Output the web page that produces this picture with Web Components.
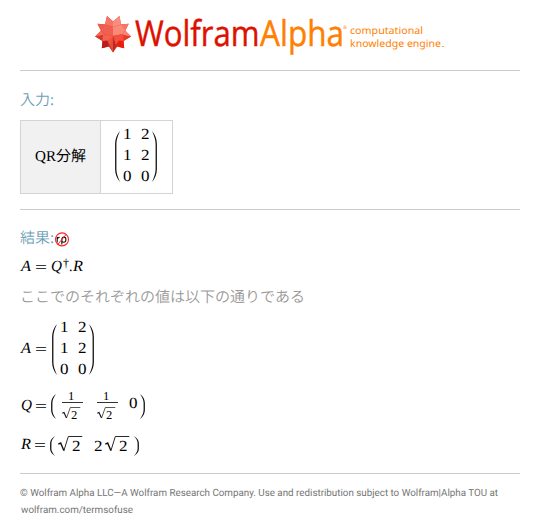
<!DOCTYPE html>
<html lang="ja"><head><meta charset="utf-8"><title>Wolfram|Alpha</title>
<style>
body{margin:0;background:#fff;font-family:"Noto Sans","Noto Sans CJK JP",sans-serif}
</style></head><body>
<wa-page></wa-page>
<script>
const define=(name,html)=>customElements.define(name,class extends HTMLElement{
  connectedCallback(){
    if(this.shadowRoot)return;
    const root=this.attachShadow({mode:'open'});
    const t=document.createElement('template');
    t.innerHTML=typeof html==='function'?html(this):html;
    root.append(t.content.cloneNode(true));
  }
});
const at=(e,n,d='')=>e.getAttribute(n)??d;

/* A run of text fitted to width w; b is its baseline, g the space before it. */
define('t-run',e=>`<style>:host{display:block;flex:none;width:${at(e,'w')}px;height:${at(e,'h','20')}px;margin-left:${at(e,'g','0')}px}
svg{display:block;overflow:visible}text{fill:currentColor;white-space:pre;text-rendering:geometricPrecision}</style>
<svg width="${at(e,'w')}" height="${at(e,'h','20')}"><text x="0" y="${at(e,'b','15')}" textLength="${at(e,'w')}" lengthAdjust="spacingAndGlyphs" font-size="${at(e,'s','15.5')}" ${e.hasAttribute('i')?'font-style="italic"':''} ${e.hasAttribute('k')?`stroke="currentColor" stroke-width="${at(e,'k')}"`:''}>${e.textContent}</text></svg>`);

define('m-paren',e=>{
  const h=+at(e,'h'),w=+at(e,'w','5'),c=Math.min(h*.36,13),r=at(e,'side')==='r';
  return `<style>:host{display:block;flex:none;margin-left:${at(e,'g','0')}px;margin-top:${at(e,'t','0')}px}svg{display:block;overflow:visible}</style>
  <svg width="${w}" height="${h}"><g ${r?`transform="translate(${w} 0) scale(-1 1)"`:''} fill="#111"><path d="M${w} 0C1.6 ${c*.3} .1 ${c*.65} .1 ${c}V${h-c}C.1 ${h-c*.65} 1.6 ${h-c*.3} ${w} ${h}C2.6 ${h-c*.4} 1.4 ${h-c*.7} 1.4 ${h-c}V${c}C1.4 ${c*.7} 2.6 ${c*.4} ${w} 0Z"/></g></svg>`});

define('m-matrix',`<style>:host{display:flex;align-items:flex-start;height:58px}
.g{display:grid;grid-template-columns:8.5px 8.5px;column-gap:9.5px;grid-auto-rows:21px;margin:0 3px}</style>
<m-paren h="51" t="4"></m-paren><div class="g">
<t-run w="8.5" h="21" b="12">1</t-run><t-run w="8.5" h="21" b="12">2</t-run>
<t-run w="8.5" h="21" b="12">1</t-run><t-run w="8.5" h="21" b="12">2</t-run>
<t-run w="8.5" h="21" b="12">0</t-run><t-run w="8.5" h="21" b="12">0</t-run></div>
<m-paren h="51" t="4" side="r" g="-.5"></m-paren>`);

define('m-root',e=>{
  const sm=e.hasAttribute('small');
  return sm?`<style>:host{display:flex;width:20px;height:14px}svg{flex:none;overflow:visible}</style>
  <svg width="9" height="14" fill="none" stroke="#111"><path d="M.3 7.3L2 6.5L4.5 12" stroke-width="1.1"/><path d="M4.5 12L8.3 1.5H18.3" stroke-width=".7"/></svg><t-run w="6.3" h="14" b="13" s="12">2</t-run>`
  :`<style>:host{display:flex;width:25px;height:20px;margin-left:${at(e,'g','0')}px}svg{flex:none;overflow:visible}</style>
  <svg width="14" height="20" fill="none" stroke="#111"><path d="M.3 9.2L2.7 8L5.8 15.6" stroke-width="1.4"/><path d="M5.8 16L10.3 1.5H24.3" stroke-width=".9"/></svg><t-run w="8.5" h="20" b="16">2</t-run>`});

define('m-frac',e=>`<style>:host{display:flex;flex-direction:column;width:21px;margin-left:${at(e,'g','0')}px}
.n{display:flex;justify-content:center;height:12px;padding-right:2px;border-bottom:1px solid #333}m-root{margin-top:3px}</style>
<div class="n"><t-run w="6.3" h="12" b="10" s="12">1</t-run></div><m-root small></m-root>`);

define('m-line',e=>`<style>:host{display:flex;align-items:flex-start;box-sizing:border-box;height:${at(e,'h')}px;padding-left:21px;color:#000;font-family:"Liberation Serif",serif}</style><slot></slot>`);

define('wa-rule',`<style>:host{display:block;height:1px;background:#ccc;margin:0 20px}</style>`);

define('wa-title',e=>`<style>:host{display:flex;height:22px;padding-left:20px;color:#6d9fb6;font-family:"Noto Sans CJK JP",sans-serif;font-weight:350}</style><t-run w="34" h="22" b="16" s="15">${e.textContent}</t-run>
${e.hasAttribute('mark')?`<svg width="16" height="22" viewBox="0 0 16 22"><g transform="translate(0 2)"><path d="M3.2 8V13.4M3.2 10Q4 8.2 5.6 8.4M7.8 15.5V10.5Q8 8.1 10 8.1Q11.9 8.1 11.9 10.7Q11.9 13.2 9.8 13.2Q8.2 13.2 7.8 11.6" fill="none" stroke="#111" stroke-width="1.1"/><circle cx="8" cy="10.4" r="6.5" fill="none" stroke="#f22" stroke-width="1.1"/><path d="M4 15.2L12 5.6" stroke="#f22" stroke-width="1"/></g></svg>`:''}`);

define('wa-spikey',`<style>:host{display:block;width:36px;height:38px}svg{display:block}</style>
<svg width="36" height="38" viewBox="0 0 36 38">
<path d="M18 37.5L13.8 31.5L6.8 33.2L7.5 26L.2 21.5L6 15.8L2.5 8.8L10 9.5L12 1L18 6.5L24.5 1L26 9.5L33.7 8.8L30.2 15.8L36 21.5L28.5 26L29.2 33.2L22.2 31.5Z" fill="#e02a1a"/>
<path d="M12 1L18 6.5V12L10 9.5Z" fill="#f77466"/><path d="M24.5 1L18 6.5V12L26 9.5Z" fill="#fb8c7d"/>
<path d="M2.5 8.8L10 9.5L12 13L6 15.8Z" fill="#ef5b4d"/><path d="M33.7 8.8L26 9.5L24 13L30.2 15.8Z" fill="#f87563"/>
<path d="M10 9.5L18 12L18 21L8 19L6 15.8Z" fill="#f06050"/><path d="M26 9.5L18 12V21L28 19L30.2 15.8Z" fill="#f98a78"/>
<path d="M.2 21.5L6 15.8L9 19.5L7.5 26Z" fill="#d2392d"/><path d="M.2 21.5L6 15.8L9 19.5Z" fill="#f66b5d"/>
<path d="M36 21.5L30.2 15.8L27 19.5L28.5 26Z" fill="#e83a28"/><path d="M36 21.5L30.2 15.8L27 19.5Z" fill="#f98574"/>
<path d="M8 19L18 21L12 27L7.5 26Z" fill="#f5614f"/><path d="M18 21L28 19L28.5 26L24 27Z" fill="#f2513d"/>
<path d="M6.8 33.2L7.5 26L12.5 25.5L13.8 31.5Z" fill="#b81c1c"/><path d="M29.2 33.2L28.5 26L23.5 25.5L22.2 31.5Z" fill="#eb1c0b"/>
<path d="M18 37.5L13 26L18 21Z" fill="#dc5044"/><path d="M18 37.5L23 26L18 21Z" fill="#c3261e"/>
<path d="M18 21L12.5 25.5L15 30ZM18 21L23.5 25.5L21 30Z" fill="#f5503e"/>
</svg>`);

define('wa-logo',`<style>:host{display:flex;height:70px;box-sizing:border-box;padding:15px 0 0 95px;font-family:"Open Sans","Noto Sans",sans-serif}
.w{color:#dd1100}.a,.tag{color:#ff7f00}.tag{display:flex;flex-direction:column;margin-left:3px;padding-top:9px;font-family:"Noto Sans",sans-serif}.two{display:flex}</style>
<wa-spikey></wa-spikey><t-run class="w" g="4" w="124.5" h="40" b="31.3" s="35.5" k=".45">Wolfram</t-run>
<t-run class="a" g=".5" w="84" h="40" b="31.3" s="35.5" k=".45">Alpha</t-run>
<t-run class="a" g="-1" w="4" h="10" b="14" s="5">®</t-run>
<div class="tag"><t-run w="73" h="13" b="10.3" s="10.2">computational</t-run><div class="two"><t-run w="91" h="13" b="10" s="10.2">knowledge engine</t-run><t-run w="4" h="13" b="10" s="8">.</t-run></div></div>`);

define('wa-input',`<style>:host{display:flex;box-sizing:border-box;width:153px;height:74px;margin-left:20px;border:1px solid #d4d4d4;color:#000;font-family:"Liberation Serif",serif}
.l{display:flex;box-sizing:border-box;width:80px;background:#f1f1f1;border-right:1px solid #d4d4d4;padding:25px 0 0 14px}
.cj{font-family:"Noto Sans CJK JP",sans-serif}.m{padding:6px 0 0 14px}</style>
<div class="l"><t-run w="21" s="15">QR</t-run><t-run class="cj" w="30" s="15">分解</t-run></div><div class="m"><m-matrix></m-matrix></div>`);

define('wa-note',e=>`<style>:host{display:flex;height:25px;padding-left:20px;color:#999;font-family:"Noto Sans CJK JP",sans-serif;font-weight:350}</style><t-run w="285" h="22" b="16" s="15">${e.textContent}</t-run>`);

define('wa-footer',`<style>:host{display:block;padding:10px 0 0 20px;color:#757575;font-family:Roboto,sans-serif}</style>
<t-run w="478" h="17" b="12" s="10">© Wolfram Alpha LLC—A Wolfram Research Company. Use and redistribution subject to Wolfram|Alpha TOU at</t-run><t-run g="1" w="112" h="17" b="12" s="10">wolfram.com/termsofuse</t-run>`);

define('wa-page',`<style>:host{display:block;width:540px;height:532px;overflow:hidden;background:#fff}
.in{padding:18px 0 9px}.res{padding:17px 0 6px}</style>
<wa-logo></wa-logo><wa-rule></wa-rule>
<div class="in"><wa-title>入力:</wa-title></div>
<wa-input></wa-input><div style="height:15px"></div><wa-rule></wa-rule>
<div class="res"><wa-title mark>結果:</wa-title></div>
<m-line h="31"><t-run i w="10" b="16">A</t-run><t-run g="4" w="12" b="17">=</t-run><t-run i g="4" w="11" b="16">Q</t-run><t-run g="1" w="6" b="12" s="12">†</t-run><t-run g="0" w="3.5" b="16">.</t-run><t-run i g="0.5" w="10" b="16">R</t-run></m-line>
<wa-note>ここでのそれぞれの値は以下の通りである</wa-note>
<div style="height:9px"></div>
<m-line h="70"><t-run i w="10" b="33">A</t-run><t-run g="4" w="12" b="34">=</t-run><div style="margin-left:5px"><m-matrix></m-matrix></div></m-line>
<m-line h="45"><t-run i w="11" b="20">Q</t-run><t-run g="3" w="12" b="21">=</t-run><m-paren g="4" t="4" h="25"></m-paren><m-frac g="6"></m-frac><m-frac g="14"></m-frac><t-run g="11" w="8.5" b="18">0</t-run><m-paren g="2" t="4" h="25" side="r"></m-paren></m-line>
<m-line h="38"><t-run i w="10" b="14">R</t-run><t-run g="3" w="12" b="15">=</t-run><m-paren g="4" t="1" h="20"></m-paren><m-root g="3"></m-root><t-run g="11" w="8.5" b="16">2</t-run><m-root g="2.5"></m-root><m-paren g="4" t="1" h="20" side="r"></m-paren></m-line>
<wa-rule></wa-rule><wa-footer></wa-footer>`);
</script></body></html>
